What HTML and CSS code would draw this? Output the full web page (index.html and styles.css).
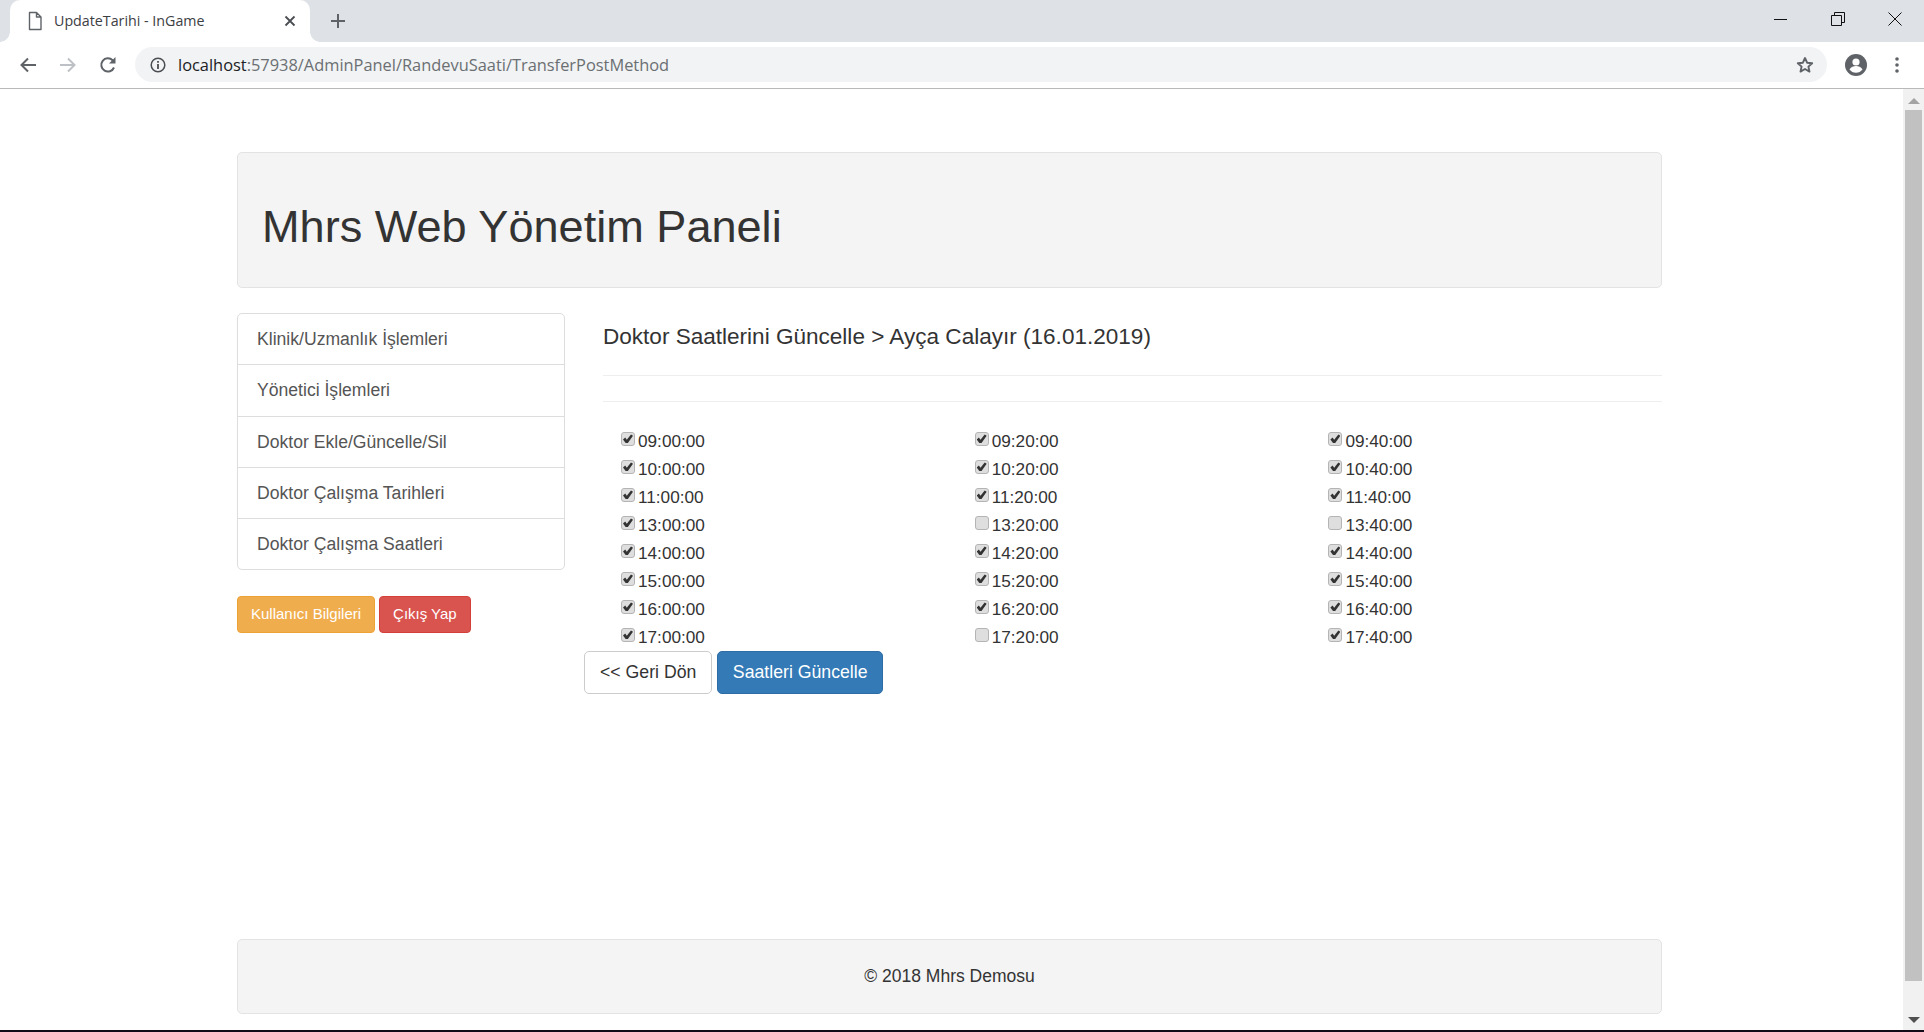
FILE: index.html
```html
<!DOCTYPE html>
<html lang="tr">
<head>
<meta charset="utf-8">
<title>UpdateTarihi - InGame</title>
<link rel="stylesheet" href="styles.css">
</head>
<body>
<div class="tabstrip">
  <div class="tab">
    <svg class="file-icon" width="16" height="20" viewBox="0 0 16 20"><path d="M2.5 1.5h7l4.5 4.5v12.5h-11.5z M9.5 1.5v4.5h4.5" fill="none" stroke="#5f6368" stroke-width="1.4" stroke-linejoin="round"/></svg>
    <span class="tab-title">UpdateTarihi - InGame</span>
    <svg class="tab-close" width="12" height="12" viewBox="0 0 12 12"><path d="M1.5 1.5l9 9M10.5 1.5l-9 9" stroke="#4a4d51" stroke-width="1.8"/></svg>
  </div>
  <svg class="new-tab" width="16" height="16" viewBox="0 0 16 16"><path d="M8 1v14M1 8h14" stroke="#5f6368" stroke-width="2"/></svg>
  <div class="window-controls">
    <svg width="14" height="14" viewBox="0 0 14 14"><path d="M0 7.5h13" stroke="#111" stroke-width="1"/></svg>
    <svg width="14" height="14" viewBox="0 0 14 14"><path d="M.5 3.5h10v10h-10z M3.5 3.5v-3h10v10h-3" fill="none" stroke="#111" stroke-width="1"/></svg>
    <svg width="14" height="14" viewBox="0 0 14 14"><path d="M.5.5l13 13M13.5.5l-13 13" stroke="#111" stroke-width="1"/></svg>
  </div>
</div>
<div class="toolbar">
  <svg class="tool back" width="18" height="18" viewBox="0 0 18 18"><path d="M17 9H3M9 2.5L2.5 9 9 15.5" fill="none" stroke="#5f6368" stroke-width="2"/></svg>
  <svg class="tool forward" width="18" height="18" viewBox="0 0 18 18"><path d="M1 9h14M9 2.5L15.5 9 9 15.5" fill="none" stroke="#bdc1c6" stroke-width="2"/></svg>
  <svg class="tool reload" width="18" height="18" viewBox="0 0 18 18"><path d="M15 11.5A6.6 6.6 0 1 1 13.6 4.3L15.5 6" fill="none" stroke="#5f6368" stroke-width="2"/><path d="M16.5 1v6.5H10z" fill="#5f6368"/></svg>
  <div class="omnibox">
    <svg class="info" width="16" height="16" viewBox="0 0 16 16"><circle cx="8" cy="8" r="6.8" fill="none" stroke="#4a4d51" stroke-width="1.5"/><path d="M7.1 7h1.8v5H7.1zM7.1 3.9h1.8v1.8H7.1z" fill="#4a4d51"/></svg>
    <span class="url"><span class="host">localhost</span>:57938/AdminPanel/RandevuSaati/TransferPostMethod</span>
    <svg class="star" width="18" height="18" viewBox="0 0 18 18"><path d="M9 2l2.1 4.7 5.1.5-3.8 3.4 1.1 5L9 13l-4.5 2.6 1.1-5L1.8 7.2l5.1-.5z" fill="none" stroke="#5f6368" stroke-width="1.9" stroke-linejoin="round"/></svg>
  </div>
  <svg class="avatar" width="22" height="22" viewBox="0 0 22 22"><circle cx="11" cy="11" r="11" fill="#5f6368"/><circle cx="11" cy="8" r="3.6" fill="#fff"/><path d="M4.5 15.500c1.5-2.600 4.200-3.400 6.500-3.400s5 .8 6.500 3.400c-1.500 2-3.900 3.300-6.500 3.300s-5-1.300-6.500-3.300z" fill="#fff"/></svg>
  <svg class="dots" width="4" height="18" viewBox="0 0 4 18"><circle cx="2" cy="3" r="1.8" fill="#5f6368"/><circle cx="2" cy="9" r="1.8" fill="#5f6368"/><circle cx="2" cy="15" r="1.8" fill="#5f6368"/></svg>
</div>
<div class="viewport">
  <div class="page">
    <div class="container">
      <header class="jumbotron"><h1>Mhrs Web Yönetim Paneli</h1></header>
      <div class="main-row">
        <aside class="sidebar">
          <ul class="menu">
            <li>Klinik/Uzmanlık İşlemleri</li>
            <li>Yönetici İşlemleri</li>
            <li>Doktor Ekle/Güncelle/Sil</li>
            <li>Doktor Çalışma Tarihleri</li>
            <li>Doktor Çalışma Saatleri</li>
          </ul>
          <div class="side-actions">
            <a class="btn-sm warning">Kullanıcı Bilgileri</a>
            <a class="btn-sm danger">Çıkış Yap</a>
          </div>
        </aside>
        <main class="content">
          <div class="content-head">
            <h4>Doktor Saatlerini Güncelle &gt; Ayça Calayır (16.01.2019)</h4>
            <hr class="rule first">
            <hr class="rule">
          </div>
          <form class="times">
            <label><input type="checkbox" checked>09:00:00</label>
            <label><input type="checkbox" checked>09:20:00</label>
            <label><input type="checkbox" checked>09:40:00</label>
            <label><input type="checkbox" checked>10:00:00</label>
            <label><input type="checkbox" checked>10:20:00</label>
            <label><input type="checkbox" checked>10:40:00</label>
            <label><input type="checkbox" checked>11:00:00</label>
            <label><input type="checkbox" checked>11:20:00</label>
            <label><input type="checkbox" checked>11:40:00</label>
            <label><input type="checkbox" checked>13:00:00</label>
            <label><input type="checkbox">13:20:00</label>
            <label><input type="checkbox">13:40:00</label>
            <label><input type="checkbox" checked>14:00:00</label>
            <label><input type="checkbox" checked>14:20:00</label>
            <label><input type="checkbox" checked>14:40:00</label>
            <label><input type="checkbox" checked>15:00:00</label>
            <label><input type="checkbox" checked>15:20:00</label>
            <label><input type="checkbox" checked>15:40:00</label>
            <label><input type="checkbox" checked>16:00:00</label>
            <label><input type="checkbox" checked>16:20:00</label>
            <label><input type="checkbox" checked>16:40:00</label>
            <label><input type="checkbox" checked>17:00:00</label>
            <label><input type="checkbox">17:20:00</label>
            <label><input type="checkbox" checked>17:40:00</label>
          </form>
          <div class="form-actions">
            <a class="btn default">&lt;&lt; Geri Dön</a>
            <a class="btn primary">Saatleri Güncelle</a>
          </div>
        </main>
      </div>
      <footer class="footer">© 2018 Mhrs Demosu</footer>
    </div>
  </div>
  <div class="scrollbar">
    <svg width="14" height="8" viewBox="0 0 14 8"><path d="M7 1l6 6H1z" fill="#a3a3a3"/></svg>
    <div class="thumb"></div>
    <svg width="14" height="8" viewBox="0 0 14 8"><path d="M1 1h12L7 7z" fill="#505050"/></svg>
  </div>
</div>
<div class="taskbar-edge"></div>
</body>
</html>
```

FILE: styles.css
```css
* { box-sizing: border-box; }
html, body { margin: 0; height: 1032px; overflow: hidden; }
body {
  display: flex;
  flex-direction: column;
  font-family: "Liberation Sans", Arial, sans-serif;
  font-size: 17.2px;
  color: #333;
  background: #fff;
}

/* Browser chrome */
.tabstrip {
  height: 42px;
  flex: none;
  background: #dee1e6;
  display: flex;
  align-items: center;
}
.tab {
  position: relative;
  width: 300px;
  height: 42px;
  margin-left: 10px;
  background: #fff;
  border-radius: 10px 10px 0 0;
  display: flex;
  align-items: center;
  padding-left: 17px;
}
.tab::before, .tab::after {
  content: "";
  position: absolute;
  bottom: 0;
  width: 10px;
  height: 10px;
}
.tab::before { left: -10px; background: radial-gradient(circle at 0 0, #dee1e6 9.5px, #fff 10px); }
.tab::after { right: -10px; background: radial-gradient(circle at 100% 0, #dee1e6 9.5px, #fff 10px); }
.file-icon { flex: none; }
.tab-title {
  margin-left: 11px;
  margin-top: -1px;
  font-family: "Open Sans", sans-serif;
  font-size: 14.25px;
  color: #3c4043;
  white-space: nowrap;
  flex: 1;
}
.tab-close { margin-right: 14px; flex: none; }
.new-tab { margin-left: 20px; flex: none; }
.window-controls {
  margin-left: auto;
  display: flex;
  gap: 43px;
  padding-right: 22px;
  align-self: flex-start;
  padding-top: 12px;
}
.toolbar {
  height: 47px;
  flex: none;
  background: #fff;
  border-bottom: 1px solid #b9b9b9;
  display: flex;
  align-items: center;
  padding-bottom: 1px;
}
.tool { flex: none; }
.back { margin-left: 19px; }
.forward { margin-left: 22px; }
.reload { margin-left: 22px; }
.omnibox {
  width: 1692px;
  height: 35px;
  margin-left: 18px;
  background: #f1f3f4;
  border-radius: 18px;
  display: flex;
  align-items: center;
  padding-left: 15px;
  padding-right: 13px;
}
.info { flex: none; }
.url {
  margin-left: 12px;
  font-family: "Open Sans", sans-serif;
  font-size: 16.4px;
  color: #6b6f73;
  white-space: nowrap;
}
.host { color: #202124; }
.star { margin-left: auto; }
.avatar { margin-left: 18px; flex: none; }
.dots { margin-left: 28px; flex: none; }

/* Viewport */
.viewport { flex: 1; min-height: 0; display: flex; }
.page { flex: 1; min-width: 0; }
.scrollbar {
  width: 21px;
  flex: none;
  background: #f1f1f1;
  display: flex;
  flex-direction: column;
  align-items: center;
  padding-top: 8px;
}
.thumb { width: 17px; height: 871px; margin: 5px 0 35px; background: #c1c1c1; }
.taskbar-edge { height: 2px; flex: none; background: #120a18; }

/* Page content */
.container {
  width: 1425px;
  height: 100%;
  margin-left: 237px;
  padding-top: 63px;
  padding-bottom: 16px;
  display: flex;
  flex-direction: column;
}
.jumbotron {
  height: 136px;
  background: #f4f4f4;
  border: 1px solid #e3e3e3;
  border-radius: 5px;
  padding: 44px 24px 0;
}
h1 {
  margin: 0;
  font-size: 45.1px;
  font-weight: 400;
  line-height: 60px;
  color: #333;
}
.main-row { margin-top: 25px; display: flex; gap: 19.5px; }
.sidebar { width: 327.5px; flex: none; }
.menu {
  list-style: none;
  margin: 0;
  padding: 0;
  border: 1px solid #ddd;
  border-radius: 5px;
}
.menu li {
  height: 51.3px;
  line-height: 51px;
  padding-left: 19px;
  font-size: 17.6px;
  color: #555;
  border-bottom: 1px solid #ddd;
}
.menu li:last-child { border-bottom: 0; height: 50.3px; }
.side-actions { margin-top: 25.5px; display: flex; gap: 4px; }
.btn-sm {
  height: 37px;
  line-height: 34px;
  padding: 0 13px;
  font-size: 15px;
  color: #fff;
  border: 1px solid;
  border-radius: 4px;
}
.warning { background: #f0ad4e; border-color: #eea236; }
.danger { background: #d9534f; border-color: #d43f3a; }
.content { flex: 1; min-width: 0; }
.content-head { padding-left: 19px; }
h4 {
  margin: 0;
  height: 62px;
  font-size: 22.55px;
  line-height: 48px;
  font-weight: 400;
  color: #333;
}
.rule { margin: 0; border: 0; border-top: 1px solid #eee; height: 1px; }
.rule + .rule { margin-top: 25px; }
.times {
  margin-top: 25px;
  padding-left: 37px;
  display: grid;
  grid-template-columns: repeat(3, 353.7px);
}
.times label { height: 28px; line-height: 28.5px; display: block; white-space: nowrap; }
.times input {
  appearance: none;
  width: 14px;
  height: 14px;
  margin: 0 3px 0 0;
  display: inline-block;
  position: relative;
  top: -3px;
  vertical-align: middle;
  background: #dedede;
  border: 1px solid #b4b4b4;
  border-radius: 3px;
}
.times input:checked::after {
  content: "";
  display: block;
  width: 10px;
  height: 9px;
  margin: 1px;
  background: #333;
  clip-path: polygon(0 55%, 22% 35%, 38% 58%, 80% 0, 100% 14%, 45% 100%, 30% 100%);
}
.form-actions { display: flex; gap: 5px; }
.btn {
  height: 43px;
  line-height: 41px;
  padding: 0 15px;
  border: 1px solid;
  border-radius: 5px;
  font-size: 17.7px;
}
.default { background: #fff; border-color: #ccc; color: #333; }
.primary { background: #337ab7; border-color: #2e6da4; color: #fff; padding: 0 14.5px; }
.footer {
  margin-top: auto;
  height: 75px;
  flex: none;
  line-height: 73px;
  font-size: 17.5px;
  text-align: center;
  background: #f4f4f4;
  border: 1px solid #e3e3e3;
  border-radius: 5px;
}
```
